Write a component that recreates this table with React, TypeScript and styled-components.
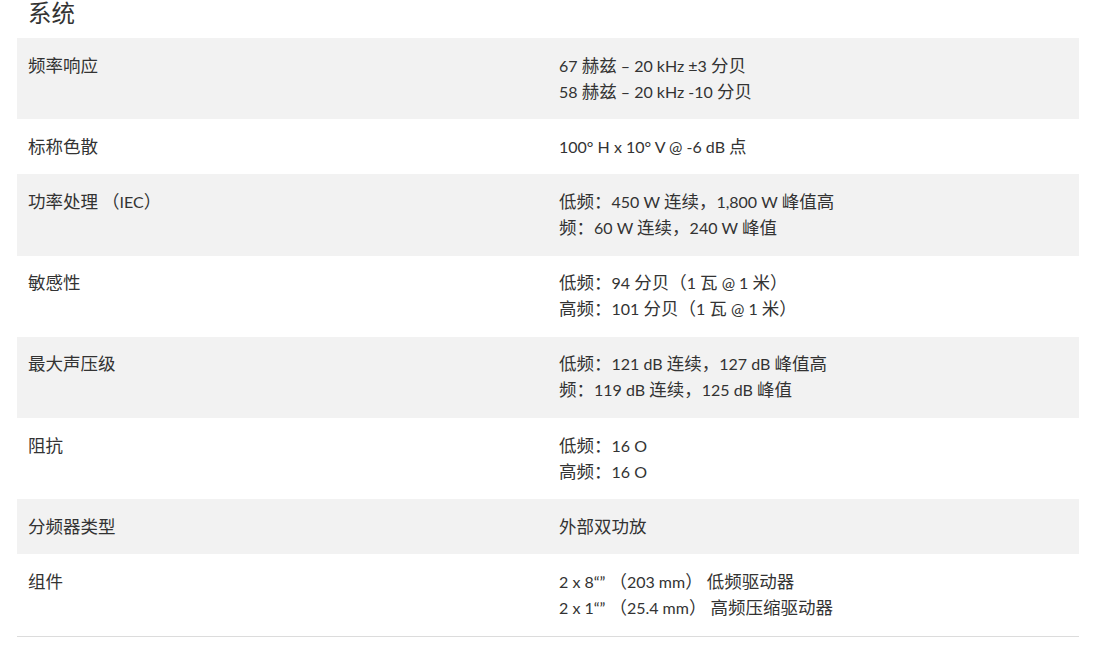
import React from 'react';
import styled, { createGlobalStyle } from 'styled-components';

const GlobalStyle = createGlobalStyle`
  html, body {
    margin: 0;
    padding: 0;
    background: #fff;
  }
  body {
    font-family: Lato, "Noto Sans CJK SC", sans-serif;
    color: #333;
  }
`;

type Spec = { label: string; lines: string[] };

const specs: Spec[] = [
  { label: '频率响应', lines: ['67 赫兹 – 20 kHz ±3 分贝', '58 赫兹 – 20 kHz -10 分贝'] },
  { label: '标称色散', lines: ['100° H x 10° V @ -6 dB 点'] },
  { label: '功率处理 （IEC）', lines: ['低频：450 W 连续，1,800 W 峰值高', '频：60 W 连续，240 W 峰值'] },
  { label: '敏感性', lines: ['低频：94 分贝（1 瓦 @ 1 米）', '高频：101 分贝（1 瓦 @ 1 米）'] },
  { label: '最大声压级', lines: ['低频：121 dB 连续，127 dB 峰值高', '频：119 dB 连续，125 dB 峰值'] },
  { label: '阻抗', lines: ['低频：16 O', '高频：16 O'] },
  { label: '分频器类型', lines: ['外部双功放'] },
  { label: '组件', lines: ['2 x 8“” （203 mm） 低频驱动器', '2 x 1“” （25.4 mm） 高频压缩驱动器'] },
];

// CJK glyphs render a bit larger than the latin ones in the original font stack
const HAN = /([\u3000-\u303f\u4e00-\u9fff\uff00-\uffef]+)/;

const Mixed = ({ text }: { text: string }) => (
  <>
    {text.split(HAN).map((part, i) =>
      HAN.test(part) ? <Han key={i}>{part}</Han> : <React.Fragment key={i}>{part}</React.Fragment>
    )}
  </>
);

export default function App() {
  return (
    <>
      <GlobalStyle />
      <Page>
        <Title>系统</Title>
        <Table>
          {specs.map((s, i) => (
            <Row key={s.label} shaded={i % 2 === 0} last={i === specs.length - 1}>
              <Cell>
                <Line>
                  <Mixed text={s.label} />
                </Line>
              </Cell>
              <Cell>
                {s.lines.map((l) => (
                  <Line key={l}>
                    <Mixed text={l} />
                  </Line>
                ))}
              </Cell>
            </Row>
          ))}
        </Table>
      </Page>
    </>
  );
}

const Page = styled.div`
  padding: 0 14px 0 17px;
`;

const Title = styled.h2`
  margin: 0;
  padding: 0 0 0 11px;
  height: 38px;
  line-height: 26px;
  font-size: 23.5px;
  font-weight: 400;
  color: #333;
`;

const Table = styled.div`
  display: flex;
  flex-direction: column;
`;

const Row = styled.div<{ shaded?: boolean; last?: boolean }>`
  display: grid;
  grid-template-columns: 1fr 1fr;
  background-color: ${({ shaded }) => (shaded ? '#f2f2f2' : '#fff')};
  border-bottom: ${({ last }) => (last ? '1px solid #dcdcdc' : 'none')};
`;

const Cell = styled.div`
  padding: 14.6px 11px 14.6px 11px;
  font-size: 16px;
  color: #333;
`;

const Line = styled.div`
  height: 26px;
  line-height: 26px;
  white-space: nowrap;
`;

const Han = styled.span`
  font-size: 17.5px;
`;
